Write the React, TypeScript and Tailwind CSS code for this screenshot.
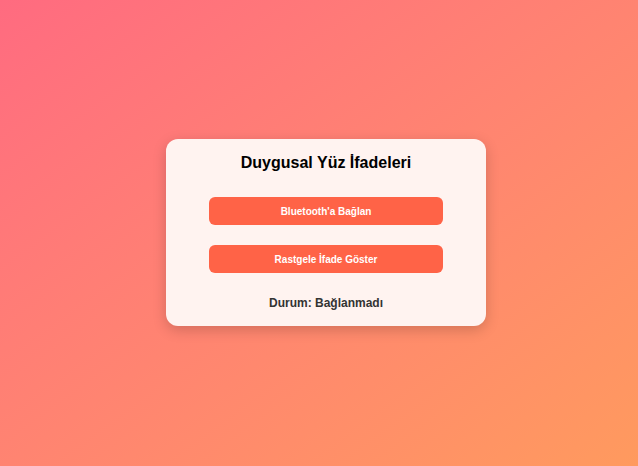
export default function App() {
  return (
    <div
      className="w-[638px] h-[466px] flex items-center justify-center bg-gradient-to-br from-[#ff6b80] to-[#ff9a5e] pl-[14px] pb-[2px]"
      style={{ fontFamily: '"Liberation Sans", Arial, sans-serif' }}
    >
      <div className="w-[320px] h-[187px] bg-[#fff3f0] rounded-xl shadow-[0_4px_14px_rgba(0,0,0,0.18)] flex flex-col items-center pt-[14px]">
        <h1 className="text-[16px] leading-5 font-bold text-black">Duygusal Yüz İfadeleri</h1>
        <button className="mt-[24px] w-[234px] h-[28px] pt-[1px] rounded-md bg-[#ff6347] text-white text-[10px] font-bold">
          Bluetooth'a Bağlan
        </button>
        <button className="mt-[20px] w-[234px] h-[28px] pt-[1px] rounded-md bg-[#ff6347] text-white text-[10px] font-bold">
          Rastgele İfade Göster
        </button>
        <p className="mt-[22px] text-[12px] leading-4 font-bold text-[#333]">Durum: Bağlanmadı</p>
      </div>
    </div>
  );
}
